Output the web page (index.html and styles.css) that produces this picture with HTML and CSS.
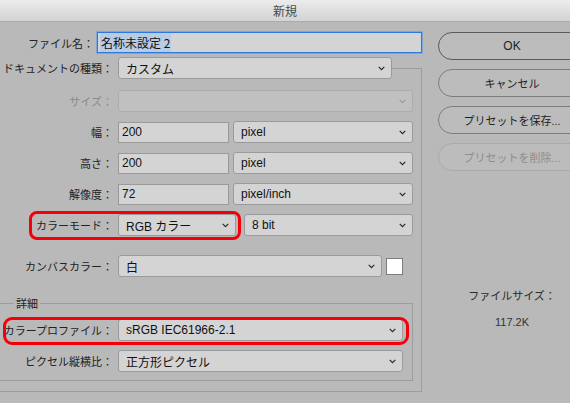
FILE: index.html
```html
<!DOCTYPE html>
<html lang="ja">
<head>
<meta charset="utf-8">
<title>新規</title>
<link rel="stylesheet" href="styles.css">
</head>
<body>
<div class="titlebar">新規</div>
<div class="dialog">
  <div class="main">
    <div class="row row-file">
      <span class="label label-file">ファイル名：</span>
      <div class="input input-file"><span class="selected">名称未設定 2</span></div>
    </div>
    <fieldset class="group">
      <legend class="group-head">
        <span class="label">ドキュメントの種類：</span>
        <div class="select select-doc"><span>カスタム</span><svg class="chev" width="7" height="5" viewBox="0 0 7 5"><polyline points="0.7,0.8 3.5,3.7 6.3,0.8"/></svg></div>
      </legend>
      <div class="row is-disabled">
        <span class="label">サイズ：</span>
        <div class="select select-fill select-disabled"><span></span><svg class="chev" width="7" height="5" viewBox="0 0 7 5"><polyline points="0.7,0.8 3.5,3.7 6.3,0.8"/></svg></div>
      </div>
      <div class="row">
        <span class="label">幅：</span>
        <div class="input input-num">200</div>
        <div class="select select-fill select-unit"><span>pixel</span><svg class="chev" width="7" height="5" viewBox="0 0 7 5"><polyline points="0.7,0.8 3.5,3.7 6.3,0.8"/></svg></div>
      </div>
      <div class="row">
        <span class="label">高さ：</span>
        <div class="input input-num">200</div>
        <div class="select select-fill select-unit"><span>pixel</span><svg class="chev" width="7" height="5" viewBox="0 0 7 5"><polyline points="0.7,0.8 3.5,3.7 6.3,0.8"/></svg></div>
      </div>
      <div class="row">
        <span class="label">解像度：</span>
        <div class="input input-num">72</div>
        <div class="select select-fill select-unit"><span>pixel/inch</span><svg class="chev" width="7" height="5" viewBox="0 0 7 5"><polyline points="0.7,0.8 3.5,3.7 6.3,0.8"/></svg></div>
      </div>
      <div class="row row-mode">
        <span class="label">カラーモード：</span>
        <div class="select select-mode"><span>RGB カラー</span><svg class="chev" width="7" height="5" viewBox="0 0 7 5"><polyline points="0.7,0.8 3.5,3.7 6.3,0.8"/></svg></div>
        <div class="select select-fill select-bit"><span>8 bit</span><svg class="chev" width="7" height="5" viewBox="0 0 7 5"><polyline points="0.7,0.8 3.5,3.7 6.3,0.8"/></svg></div>
        <span class="mark mark-mode"></span>
      </div>
      <div class="row row-canvas">
        <span class="label">カンバスカラー：</span>
        <div class="select select-canvas"><span>白</span><svg class="chev" width="7" height="5" viewBox="0 0 7 5"><polyline points="0.7,0.8 3.5,3.7 6.3,0.8"/></svg></div>
        <span class="swatch"></span>
      </div>
      <fieldset class="detail">
        <legend class="detail-head">詳細</legend>
        <div class="row row-profile">
          <span class="label">カラープロファイル：</span>
          <div class="select select-fill"><span>sRGB IEC61966-2.1</span><svg class="chev" width="7" height="5" viewBox="0 0 7 5"><polyline points="0.7,0.8 3.5,3.7 6.3,0.8"/></svg></div>
          <span class="mark mark-profile"></span>
        </div>
        <div class="row row-last">
          <span class="label">ピクセル縦横比：</span>
          <div class="select select-fill"><span>正方形ピクセル</span><svg class="chev" width="7" height="5" viewBox="0 0 7 5"><polyline points="0.7,0.8 3.5,3.7 6.3,0.8"/></svg></div>
        </div>
      </fieldset>
    </fieldset>
  </div>
  <div class="side">
    <div class="btn btn-default">OK</div>
    <div class="btn">キャンセル</div>
    <div class="btn">プリセットを保存...</div>
    <div class="btn btn-disabled">プリセットを削除...</div>
    <div class="filesize">
      <div class="filesize-label">ファイルサイズ：</div>
      <div class="filesize-value">117.2K</div>
    </div>
  </div>
</div>
</body>
</html>
```

FILE: styles.css
```css
html, body {
  margin: 0;
  padding: 0;
}
body {
  width: 570px;
  height: 403px;
  overflow: hidden;
  background: #b9b9b9;
  font-family: "Liberation Sans", "Noto Sans CJK JP", sans-serif;
  font-size: 12px;
  color: #1c1c1c;
}
.titlebar {
  height: 21px;
  line-height: 21px;
  border-bottom: 1px solid #ababab;
  background: linear-gradient(#ececec, #d3d3d3);
  text-align: center;
  font-family: "Noto Sans CJK JP", sans-serif;
  font-size: 12px;
  color: #4a4a4a;
}
.dialog {
  display: flex;
  align-items: flex-start;
}
.main {
  width: 423px;
  margin-left: -1px;
  padding-top: 10px;
  flex: none;
}
.row {
  display: flex;
  align-items: center;
  height: 22px;
  margin-bottom: 9px;
  position: relative;
}
.label {
  width: 113px;
  margin-right: 5px;
  flex: none;
  text-align: right;
  font-family: "Noto Sans CJK JP", sans-serif;
  font-size: 11px;
  color: #222;
  white-space: nowrap;
}
.row-file {
  height: 21px;
  margin-bottom: 4px;
}
.label-file {
  width: 95px;
  margin-right: 3px;
}
.input {
  box-sizing: border-box;
  height: 21px;
  background: #d4d4d4;
  border: 1px solid #9a9a9a;
  padding-left: 3px;
  line-height: 19px;
  font-size: 12px;
  color: #111;
  white-space: nowrap;
}
.input-file {
  width: 326px;
  border-color: #2b78e0;
  box-shadow: 0 0 0 0.6px #5c9bea;
  padding-left: 2px;
  font-family: "Noto Sans CJK JP", sans-serif;
  font-size: 12px;
  line-height: 19px;
}
.selected {
  background: #b9cce2;
  padding: 1px 1px;
}
.input-num {
  width: 111px;
  margin-right: 4px;
  flex: none;
}
.select {
  box-sizing: border-box;
  height: 22px;
  background: #d4d4d4;
  border: 1px solid #9b9b9b;
  border-radius: 3px;
  display: flex;
  align-items: center;
  justify-content: space-between;
  padding: 0 6px 0 7px;
  font-size: 12px;
  color: #111;
  white-space: nowrap;
  flex: none;
}
.select span {
  font-family: "Liberation Sans", "Noto Sans CJK JP", sans-serif;
}
.chev {
  flex: none;
  margin-top: 1px;
}
.chev polyline {
  fill: none;
  stroke: #2a2a2a;
  stroke-width: 1.2;
}
.select-fill {
  flex: 1;
}
.select-disabled {
  background: #c0c0c0;
  border-color: #adadad;
}
.select-disabled .chev polyline {
  stroke: #9c9c9c;
}
.is-disabled .label {
  color: #8a8a8a;
}
.select-doc {
  width: 274px;
}
.select-mode {
  width: 118px;
  margin-right: 8px;
}
.select-canvas {
  width: 264px;
  margin-right: 4px;
}
.swatch {
  width: 15px;
  height: 15px;
  background: #fff;
  border: 1px solid #7c7c7c;
  flex: none;
}
.row-mode {
  margin-bottom: 19px;
}
.row-canvas {
  margin-bottom: 19px;
}
.row-last {
  margin-bottom: 0;
}

/* group boxes */
.group {
  box-sizing: border-box;
  width: 423px;
  margin: 0;
  border: 1px solid #9d9d9d;
  padding: 11px 8px 10px 0;
  min-width: 0;
}
.group-head {
  padding: 0;
  display: flex;
  align-items: center;
}
.detail {
  margin: 0 0 0 -1px;
  border: 1px solid #9d9d9d;
  padding: 8px 9px 8px 0;
  min-width: 0;
}
.detail-head {
  margin-left: 14px;
  padding: 0 2px;
  line-height: 15px;
  font-family: "Noto Sans CJK JP", sans-serif;
  font-size: 11px;
  color: #222;
}

/* red annotation outlines */
.mark {
  position: absolute;
  box-sizing: border-box;
  border: 3px solid #f5000a;
  border-radius: 8px;
  pointer-events: none;
}
.mark-mode {
  left: 29px;
  top: -3px;
  width: 212px;
  height: 29px;
}
.mark-profile {
  left: 3px;
  top: -2px;
  width: 406px;
  height: 28px;
  border-radius: 9px;
}

/* right column */
.side {
  width: 148px;
  margin-left: 16px;
  padding-top: 10px;
  flex: none;
}
.btn {
  box-sizing: border-box;
  height: 28px;
  margin-bottom: 9px;
  border: 1px solid #7d7d7d;
  border-radius: 14px;
  display: flex;
  align-items: center;
  justify-content: center;
  font-family: "Liberation Sans", "Noto Sans CJK JP", sans-serif;
  font-size: 11px;
  color: #1e1e1e;
  background: #bcbcbc;
}
.btn-default {
  border-color: #5a5a5a;
  font-size: 12px;
}
.btn-disabled {
  border-color: #aaaaaa;
  color: #8d8d8d;
  margin-bottom: 0;
}
.filesize {
  margin-top: 118px;
  text-align: center;
  font-family: "Liberation Sans", "Noto Sans CJK JP", sans-serif;
  font-size: 11px;
  color: #2a2a2a;
}
.filesize-label {
  line-height: 14px;
}
.filesize-value {
  margin-top: 12px;
  line-height: 14px;
  color: #333;
}
```
